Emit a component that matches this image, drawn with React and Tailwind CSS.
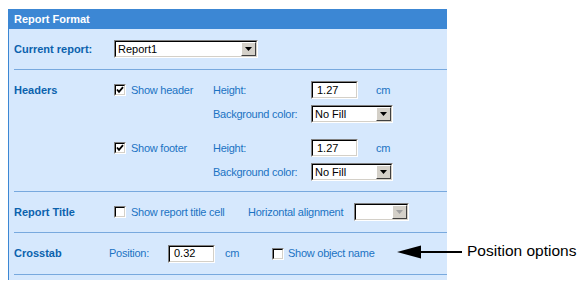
import React from 'react';

const font = "font-['Liberation_Sans',Arial,sans-serif]";

const Check = ({ checked }) => (
  <span className="flex h-[12px] w-[12px] shrink-0 items-center justify-center border border-t-[#808080] border-l-[#808080] border-r-white border-b-white">
    <span className="flex h-full w-full items-center justify-center border border-t-black border-l-black border-r-[#d4d0c8] border-b-[#d4d0c8] bg-white">
      {checked && (
        <svg width="8" height="8" viewBox="0 0 8 8">
          <path d="M1 3.5 L3 5.8 L7 1.2" fill="none" stroke="#000" strokeWidth="1.8" />
        </svg>
      )}
    </span>
  </span>
);

const Field = ({ value, width }) => (
  <div className={`flex h-[18px] ${width} border border-t-[#808080] border-l-[#808080] border-r-white border-b-white`}>
    <div className="flex flex-1 items-center border border-t-black border-l-black border-r-[#d4d0c8] border-b-[#d4d0c8] bg-white pl-[4px] text-[11px] text-black">
      {value}
    </div>
  </div>
);

const Select = ({ value, width, disabled }) => (
  <div className={`flex h-[18px] ${width} border border-t-[#808080] border-l-[#808080] border-r-white border-b-white`}>
    <div className="flex flex-1 items-stretch border border-t-black border-l-black border-r-[#d4d0c8] border-b-[#d4d0c8] bg-white">
      <span className="flex flex-1 items-center pl-[2px] text-[11px] text-black">{value}</span>
      <span className="flex w-[15px] items-center justify-center border border-t-white border-l-white border-r-[#404040] border-b-[#404040] bg-[#d4d0c8]">
        <svg width="7" height="4" viewBox="0 0 7 4">
          <polygon points="0,0 7,0 3.5,4" fill={disabled ? '#a0a0a0' : '#000'} />
        </svg>
      </span>
    </div>
  </div>
);

const Sep = () => <div className="ml-[5px] h-px bg-[#78a9de]" />;

const Label = ({ children }) => (
  <span className="w-[100px] shrink-0 text-[11px] font-bold text-[#0b62ad]">{children}</span>
);

const Txt = ({ children, className = '' }) => (
  <span className={`text-[11px] tracking-[-0.25px] text-[#1b73c3] ${className}`}>{children}</span>
);

export default function App() {
  return (
    <div className={`relative h-[285px] w-[585px] bg-white ${font}`}>
      <div className="ml-[8px] pt-[9px] w-[439px]">
        <div className="flex h-[20px] items-center bg-[#3c87d4] pl-[6px] pt-[1px] text-[11px] font-bold text-white">
          Report Format
        </div>
        <div className="border-l border-[#3c87d4] bg-[#d6e8fd]">
          <div className="flex h-[40px] items-center pl-[5px]">
            <Label>Current report:</Label>
            <Select value="Report1" width="w-[144px]" />
          </div>
          <Sep />
          <div className="flex pl-[5px] pt-[11px] pb-[10px]">
            <div className="flex h-[18px] items-center">
              <Label>Headers</Label>
            </div>
            <div className="flex flex-col">
              {['Show header', 'Show footer'].map((t, i) => (
                <div key={t} className={`flex flex-col gap-[6px] ${i ? 'mt-[16px]' : ''}`}>
                  <div className="flex h-[18px] items-center">
                    <div className="flex w-[99px] items-center gap-[5px]">
                      <Check checked />
                      <Txt>{t}</Txt>
                    </div>
                    <Txt className="w-[98px]">Height:</Txt>
                    <Field value="1.27" width="w-[47px]" />
                    <Txt className="ml-[18px]">cm</Txt>
                  </div>
                  <div className="flex h-[18px] items-center">
                    <Txt className="ml-[99px] w-[98px]">Background color:</Txt>
                    <Select value="No Fill" width="w-[82px]" />
                  </div>
                </div>
              ))}
            </div>
          </div>
          <Sep />
          <div className="flex h-[40px] items-center pl-[5px]">
            <Label>Report Title</Label>
            <div className="flex w-[134px] items-center gap-[5px]">
              <Check />
              <Txt>Show report title cell</Txt>
            </div>
            <Txt className="w-[106px]">Horizontal alignment</Txt>
            <Select value="" width="w-[55px]" disabled />
          </div>
          <Sep />
          <div className="flex h-[41px] items-center pl-[5px]">
            <span className="w-[95px] shrink-0 text-[11px] font-bold text-[#0b62ad]">Crosstab</span>
            <Txt className="w-[59px]">Position:</Txt>
            <Field value="0.32" width="w-[47px]" />
            <Txt className="ml-[10px] w-[47px]">cm</Txt>
            <div className="flex items-center gap-[4px]">
              <Check />
              <Txt>Show object name</Txt>
            </div>
          </div>
          <Sep />
          <div className="h-[5px]" />
        </div>
      </div>

      {/* annotation */}
      <svg className="absolute left-[396px] top-[244px]" width="68" height="16" viewBox="0 0 68 16">
        <polygon points="1,8 25,1.5 25,14.5" fill="#000" />
        <rect x="24" y="7" width="42" height="2" fill="#000" />
      </svg>
      <span className="absolute left-[467px] top-[242px] text-[15.5px] leading-[18px] text-black">
        Position options
      </span>
    </div>
  );
}
